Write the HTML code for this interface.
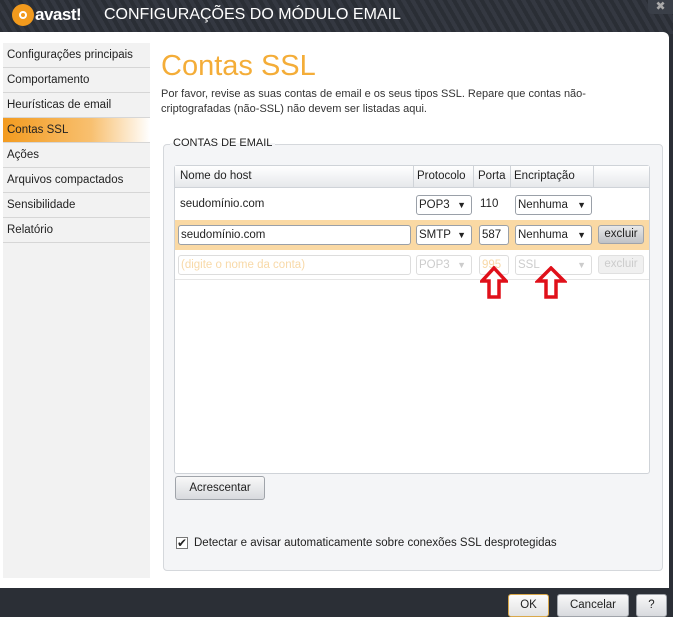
<!DOCTYPE html>
<html><head><meta charset="utf-8"><style>
*{box-sizing:border-box;margin:0;padding:0}
body{width:673px;height:617px;overflow:hidden;background:#2b2f36;font-family:"Liberation Sans",sans-serif;font-size:11.5px;color:#222;position:relative}
.top{position:absolute;left:0;top:0;width:673px;height:34px;background:repeating-linear-gradient(60deg,#2a2e35 0 4px,#343841 4px 8px)}
.logo{position:absolute;left:12px;top:4px;width:22px;height:22px;border-radius:50%;background:#f29a1d}
.logo:after{content:"";position:absolute;left:7px;top:7px;width:8px;height:8px;border-radius:50%;border:2px solid #fff;box-sizing:border-box}
.brand{position:absolute;left:35px;top:5px;color:#fff;font-weight:bold;font-size:17px;letter-spacing:-0.5px}
.title{position:absolute;left:104px;top:6px;color:#fff;font-size:16px}
.close{position:absolute;left:648px;top:0;width:25px;height:14px;background:#3a3f48;color:#aaa;font-size:12px;text-align:center;line-height:12px;border-radius:0 0 0 4px}
.panel{position:absolute;left:0;top:32px;width:669px;height:556px;background:#fff;border-radius:0 6px 0 0}
.nav{position:absolute;left:3px;top:43px;width:147px;height:535px;background:#f2f2f2}
.nav div{height:25px;line-height:24px;padding-left:4px;border-bottom:1px solid #d6d6d6;font-size:11.5px}
.nav .sel{background:linear-gradient(90deg,#f39b1f,#f8c070 60%,#fff);}
h1{position:absolute;left:161px;top:50px;font-weight:normal;font-size:29px;color:#f4ad38}
.desc{position:absolute;left:161px;top:87px;font-size:11px;line-height:15px;color:#333;width:470px}
.group{position:absolute;left:163px;top:144px;width:500px;height:427px;border:1px solid #d5d8dc;border-radius:4px;background:#f4f5f7}
.glabel{position:absolute;left:170px;top:137px;padding:0 3px;font-size:11px;color:#222;background:linear-gradient(#fff 50%,#f4f5f7 50%)}
.tbl{position:absolute;left:174px;top:165px;width:476px;height:309px;border:1px solid #cfd3d8;border-radius:3px;background:#fff}
.hdr{position:absolute;left:0;top:0;width:474px;height:22px;background:linear-gradient(#fff,#e6e8eb);border-bottom:1px solid #cfd3d8}
.hdr span{position:absolute;top:4px;font-size:11.5px}
.sep{position:absolute;top:0;width:1px;height:22px;background:#cfd3d8}
.row{position:absolute;left:0;width:474px;height:30px}
.t{position:absolute;font-size:11.5px}
.sel2{position:absolute;height:20px;border:1px solid #9aa0a8;border-radius:3px;background:#fff;font-size:11.5px;line-height:18px;padding-left:2px}
.sel2 b{position:absolute;right:5px;top:0;font-size:9px}
.dis{color:#ccc;border-color:#ddd}
.btn{position:absolute;border:1px solid #a0a4aa;border-radius:3px;background:linear-gradient(#f8f8f8,#d8dade);font-size:11.5px;text-align:center}
.arrow{position:absolute}
</style></head><body>
<div class="top"><div class="logo"></div><div class="brand">avast!</div><div class="title">CONFIGURAÇÕES DO MÓDULO EMAIL</div><div class="close">✖</div></div>
<div class="panel"></div>
<div class="nav">
<div>Configurações principais</div><div>Comportamento</div><div>Heurísticas de email</div><div class="sel">Contas SSL</div><div>Ações</div><div>Arquivos compactados</div><div>Sensibilidade</div><div>Relatório</div>
</div>
<h1>Contas SSL</h1>
<div class="desc">Por favor, revise as suas contas de email e os seus tipos SSL. Repare que contas não-criptografadas (não-SSL) não devem ser listadas aqui.</div>
<div class="group"></div>
<div class="glabel">CONTAS DE EMAIL</div>
<div class="tbl">
<div class="hdr">
<span style="left:5px">Nome do host</span><div class="sep" style="left:238px"></div>
<span style="left:242px">Protocolo</span><div class="sep" style="left:298px"></div>
<span style="left:303px">Porta</span><div class="sep" style="left:335px"></div>
<span style="left:339px">Encriptação</span><div class="sep" style="left:418px"></div>
</div>
<div class="row" style="top:24px"><span class="t" style="left:5px;top:8px">seudomínio.com</span>
<div class="sel2" style="left:241px;top:5px;width:56px">POP3<b>▼</b></div><span class="t" style="left:305px;top:8px">110</span>
<div class="sel2" style="left:340px;top:5px;width:77px">Nenhuma<b>▼</b></div></div>
<div class="row" style="top:54px;background:#fad9a4">
<div class="sel2" style="left:3px;top:5px;width:233px">seudomínio.com</div>
<div class="sel2" style="left:241px;top:5px;width:56px">SMTP<b>▼</b></div>
<div class="sel2" style="left:304px;top:5px;width:30px">587</div>
<div class="sel2" style="left:340px;top:5px;width:77px">Nenhuma<b>▼</b></div>
<div class="btn" style="left:423px;top:5px;width:46px;height:19px;line-height:17px;background:linear-gradient(#e8e8e8,#bfc2c6)">excluir</div></div>
<div class="row" style="top:84px;border-bottom:1px solid #e6e6e6">
<div class="sel2 dis" style="left:3px;top:5px;width:233px;color:#f8d9a8">(digite o nome da conta)</div>
<div class="sel2 dis" style="left:241px;top:5px;width:56px">POP3<b>▼</b></div>
<div class="sel2 dis" style="left:304px;top:5px;width:30px;color:#f8d9a8">995</div>
<div class="sel2 dis" style="left:340px;top:5px;width:77px">SSL<b>▼</b></div>
<div class="btn" style="left:423px;top:5px;width:46px;height:19px;line-height:17px;color:#ccc;border-color:#e0e0e0;background:#f0f0f0">excluir</div></div>
</div>
<svg class="arrow" style="left:480px;top:266px" width="28" height="34"><path d="M14 2 L26 15 L19 15 L19 31 L9 31 L9 15 L2 15 Z" fill="#fff" stroke="#e0101a" stroke-width="3.5" stroke-linejoin="miter"/></svg>
<svg class="arrow" style="left:535px;top:266px" width="32" height="34"><path d="M16 2 L29 15 L21 15 L21 31 L11 31 L11 15 L3 15 Z" fill="#fff" stroke="#e0101a" stroke-width="3.5"/></svg>
<div class="btn" style="left:175px;top:476px;width:90px;height:24px;line-height:22px">Acrescentar</div>
<div style="position:absolute;left:176px;top:537px;width:12px;height:12px;border:1px solid #777;background:#fff;font-size:12px;line-height:10px">✔</div>
<span class="t" style="left:194px;top:537px">Detectar e avisar automaticamente sobre conexões SSL desprotegidas</span>
<div class="btn" style="left:508px;top:594px;width:41px;height:23px;line-height:21px;border-color:#d9a84a;background:linear-gradient(#fcfcfc,#e2e2e2)">OK</div>
<div class="btn" style="left:557px;top:594px;width:72px;height:23px;line-height:21px">Cancelar</div>
<div class="btn" style="left:636px;top:594px;width:31px;height:23px;line-height:21px">?</div>
</body></html>
